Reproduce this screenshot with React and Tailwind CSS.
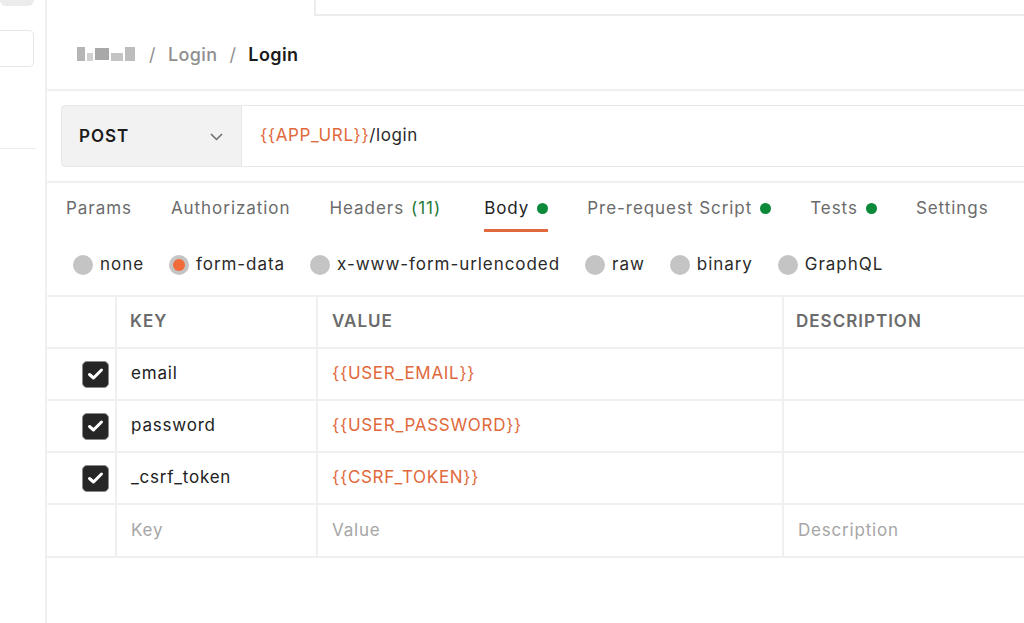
import React from 'react';

const TABS = [
  { label: 'Params' },
  { label: 'Authorization' },
  { label: 'Headers', count: '(11)' },
  { label: 'Body', dot: true, active: true },
  { label: 'Pre-request Script', dot: true },
  { label: 'Tests', dot: true },
  { label: 'Settings' },
];

const BODY_TYPES = ['none', 'form-data', 'x-www-form-urlencoded', 'raw', 'binary', 'GraphQL'];

const ROWS = [
  { key: 'email', value: '{{USER_EMAIL}}' },
  { key: 'password', value: '{{USER_PASSWORD}}' },
  { key: '_csrf_token', value: '{{CSRF_TOKEN}}' },
];

function Checkbox() {
  return (
    <span className="w-[27px] h-[27px] rounded-[5px] bg-[#262626] border border-[#8a8a8a] flex items-center justify-center">
      <svg width="17" height="14" viewBox="0 0 17 14" fill="none">
        <path d="M2.5 7.5 L6.5 11 L14.5 3" stroke="#fff" strokeWidth="3" strokeLinecap="round" strokeLinejoin="round" />
      </svg>
    </span>
  );
}

export default function App() {
  return (
    <div className="flex w-[1024px] h-[623px] overflow-hidden bg-white font-['Inter',sans-serif] text-[#212121] tracking-[0.8px]">
      {/* Sidebar */}
      <div className="w-[47px] shrink-0 border-r-2 border-[#f0f0f0] flex flex-col">
        <div className="w-[34px] h-[6px] bg-[#ececec] rounded-b-[6px]" />
        <div className="mt-[24px] w-[34px] h-[37px] border border-l-0 border-[#e6e6e6] rounded-r-[5px]" />
        <div className="mt-[81px] w-[36px] border-b border-[#ececec]" />
      </div>

      {/* Main */}
      <div className="flex-1 flex flex-col min-w-0">
        {/* Top tab strip */}
        <div className="flex h-[16px] shrink-0">
          <div className="w-[267px]" />
          <div className="flex-1 border-l-2 border-b-2 border-[#ececec]" />
        </div>

        {/* Breadcrumb */}
        <div className="h-[75px] shrink-0 flex items-center pl-[30px] pt-[3px] border-b-2 border-[#f0f0f0] text-[18px] tracking-[0.4px]">
          <span className="flex items-center gap-[2px] mr-[14px]">
            <span className="w-[8px] h-[14px] bg-[#b5b5b5]" />
            <span className="w-[6px] h-[8px] bg-[#d0d0d0] mt-[6px]" />
            <span className="w-[14px] h-[12px] bg-[#a8a8a8]" />
            <span className="w-[12px] h-[8px] bg-[#c4c4c4] mt-[6px]" />
            <span className="w-[10px] h-[14px] bg-[#bdbdbd]" />
          </span>
          <span className="text-[#8f8f8f]">/</span>
          <span className="ml-[12px] text-[#8f8f8f] font-medium">Login</span>
          <span className="ml-[12px] text-[#8f8f8f]">/</span>
          <span className="ml-[12px] font-semibold text-[#1a1a1a]">Login</span>
        </div>

        {/* Request bar */}
        <div className="shrink-0 pl-[14px] pt-[14px] pb-[14px] border-b-2 border-[#f0f0f0]">
          <div className="flex h-[62px] text-[17px]">
            <div className="w-[181px] bg-[#f2f2f2] border border-[#e8e8e8] rounded-l-[4px] flex items-center justify-between pl-[17px] pr-[18px] pt-[2px]">
              <span className="font-semibold text-[#1c1c1c] tracking-[1px]">POST</span>
              <svg width="13" height="8" viewBox="0 0 13 8" fill="none">
                <path d="M1 1 L6.5 6.5 L12 1" stroke="#6b6b6b" strokeWidth="1.5" />
              </svg>
            </div>
            <div className="flex-1 border-y border-[#e8e8e8] flex items-center pl-[18px] tracking-[0.6px]">
              <span className="text-[#e0693c]">{'{{APP_URL}}'}</span>
              <span className="text-[#2a2a2a]">/login</span>
            </div>
          </div>
        </div>

        {/* Tabs */}
        <div className="shrink-0 flex pl-[19px] gap-[39px] text-[17px] h-[51px] tracking-[0.95px]">
          {TABS.map((t) => (
            <div key={t.label} className={`relative flex items-center ${t.count ? 'mr-[4px]' : ''}`}>
              <span className={t.active ? 'text-[#1f1f1f]' : 'text-[#6b6b6b]'}>{t.label}</span>
              {t.count && <span className="ml-[7px] text-[#1f7a3a]">{t.count}</span>}
              {t.dot && <span className="ml-[8px] w-[11px] h-[11px] rounded-full bg-[#0c8a3a]" />}
              {t.active && <span className="absolute left-0 right-0 bottom-[2px] h-[3px] bg-[#e0693c]" />}
            </div>
          ))}
        </div>

        {/* Body types */}
        <div className="shrink-0 flex items-center pl-[26px] h-[63px] text-[17px] text-[#2a2a2a] border-b-2 border-[#f0f0f0] tracking-[0.95px]">
          {BODY_TYPES.map((b) => (
            <div key={b} className="flex items-center mr-[25px]">
              {b === 'form-data' ? (
                <span className="w-[20px] h-[20px] rounded-full bg-[#c4c4c4] flex items-center justify-center">
                  <span className="w-[12px] h-[12px] rounded-full bg-[#f26b3a]" />
                </span>
              ) : (
                <span className="w-[20px] h-[20px] rounded-full bg-[#c4c4c4]" />
              )}
              <span className="ml-[7px]">{b}</span>
            </div>
          ))}
        </div>

        {/* Table */}
        <div className="shrink-0 text-[17px] border-b-2 border-[#f0f0f0]">
          <div className="flex h-[52px] border-b-2 border-[#f0f0f0] tracking-[1px]">
            <div className="w-[70px] border-r-2 border-[#f0f0f0]" />
            <div className="w-[201px] border-r-2 border-[#f0f0f0] flex items-center pl-[13px] font-semibold text-[#6b6b6b]">KEY</div>
            <div className="w-[466px] border-r-2 border-[#f0f0f0] flex items-center pl-[14px] font-semibold text-[#6b6b6b]">VALUE</div>
            <div className="flex-1 flex items-center pl-[12px] font-semibold text-[#6b6b6b]">DESCRIPTION</div>
          </div>
          {ROWS.map((r) => (
            <div key={r.key} className="flex h-[52px] border-b-2 border-[#f0f0f0]">
              <div className="w-[70px] border-r-2 border-[#f0f0f0] flex items-center pl-[35px]">
                <Checkbox />
              </div>
              <div className="w-[201px] border-r-2 border-[#f0f0f0] flex items-center pl-[14px] text-[#212121]">{r.key}</div>
              <div className="w-[466px] border-r-2 border-[#f0f0f0] flex items-center pl-[14px] text-[#e0693c] tracking-[0.7px]">{r.value}</div>
              <div className="flex-1" />
            </div>
          ))}
          <div className="flex h-[51px]">
            <div className="w-[70px] border-r-2 border-[#f0f0f0]" />
            <div className="w-[201px] border-r-2 border-[#f0f0f0] flex items-center pl-[14px] text-[#a6a6a6]">Key</div>
            <div className="w-[466px] border-r-2 border-[#f0f0f0] flex items-center pl-[14px] text-[#a6a6a6]">Value</div>
            <div className="flex-1 flex items-center pl-[14px] text-[#a6a6a6]">Description</div>
          </div>
        </div>
      </div>
    </div>
  );
}
